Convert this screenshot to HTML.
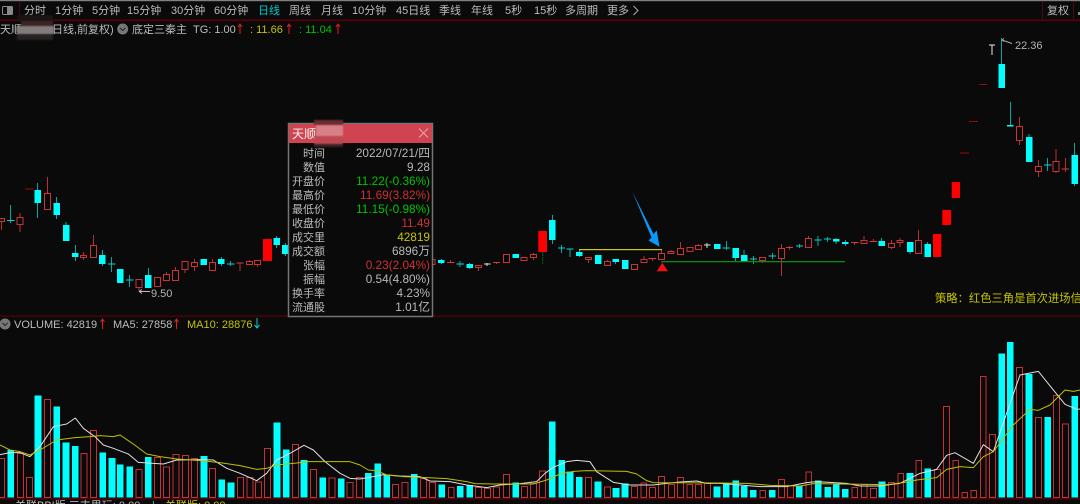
<!DOCTYPE html>
<html><head><meta charset="utf-8"><style>
html,body{margin:0;padding:0;background:#0a0a0a;width:1080px;height:504px;overflow:hidden}
svg{display:block}
text{font-family:"Liberation Sans","WenQuanYi Zen Hei","Noto Sans CJK SC",sans-serif;font-size:11px;fill:#bcbcbc}
.g{fill:#00c400}.r{fill:#cf3034}.y{fill:#c4c400}.w{fill:#b8b8b8}
.v{font-size:11.8px}
.c{shape-rendering:crispEdges}
</style></head><body>
<svg width="1080" height="504" viewBox="0 0 1080 504" xmlns="http://www.w3.org/2000/svg">
<rect width="1080" height="504" fill="#0a0a0a"/>
<rect width="1080" height="1.2" fill="#808080"/>
<rect y="19.5" width="1080" height="1.6" fill="#5c0008"/>
<rect y="315.5" width="1080" height="1.2" fill="#5c0008"/>
<rect y="498" width="1080" height="1.4" fill="#5c0008"/>
<path d="M19.5 2V19M1042.5 2V19M1073.5 2V19" stroke="#4c0a0e" fill="none"/>
<rect x="2.5" y="6.5" width="10" height="8" rx="1" fill="none" stroke="#8a8a8a"/><rect x="7" y="7" width="5" height="7" fill="#8a8a8a"/>
<rect x="1078" y="12" width="2" height="3" fill="#888"/>

<!-- tabs -->
<text x="24" y="14">分时</text><text x="55" y="14">1分钟</text><text x="92" y="14">5分钟</text><text x="127" y="14">15分钟</text><text x="171" y="14">30分钟</text><text x="214" y="14">60分钟</text>
<text x="258" y="14" style="fill:#00c8c8">日线</text><text x="289" y="14">周线</text><text x="321" y="14">月线</text><text x="352" y="14">10分钟</text><text x="396" y="14">45日线</text><text x="439" y="14">季线</text><text x="471" y="14">年线</text><text x="505" y="14">5秒</text><text x="534" y="14">15秒</text><text x="565" y="14">多周期</text><text x="607" y="14">更多</text>
<path d="M633.5 6L638 10.5L633.5 15" fill="none" stroke="#aaa"/>
<text x="1047" y="14">复权</text>

<!-- info line -->
<text x="0" y="33">天顺</text>
<text x="52" y="33">日线,前复权)</text>
<g style="filter:blur(.8px)"><rect x="17" y="15" width="36" height="6" fill="#1c1414"/><rect x="21" y="21" width="32" height="6" fill="#3a2424"/><rect x="17" y="26" width="37" height="8" fill="#847c7c"/><rect x="17" y="34" width="36" height="6" fill="#262222"/></g>
<circle cx="122.7" cy="29" r="5.5" fill="#777"/><path d="M120 27.8l2.7 2.7 2.7-2.7" fill="none" stroke="#222"/>
<text x="132" y="33">底定三秦主</text>
<text x="193" y="33">TG: 1.00</text>
<text x="250" y="33" class="y">: 11.66</text>
<text x="299" y="33" class="g">: 11.04</text>
<path d="M240 24V34M238 27l2-3 2 3M289 24V34M287 27l2-3 2 3M338 24V34M336 27l2-3 2 3" fill="none" stroke="#e02020"/>

<!-- candles: wicks -->
<path class="c" fill="none" stroke="#00a8a8" d="M10.7 205V223M37.7 183V218M56.7 197V219M66 222V225M75.3 245V261M102.3 250V266M111.7 257V272M129.7 275V287M148.3 268V275M221.3 257V266M230.7 261V266M276.7 236V248M285.3 243V256M441.3 259V264M460 261V267M469.7 263V269M552.3 215V244M561.3 245V253M570 249V257M579.3 249V257M615.7 259V264M726.3 241V250M735.7 258V262M744 250V255M753.3 256V264M772.3 253V259M799.3 244V248M818 236V246M827.3 237V242M836 238V244M845.3 240V246M881.7 238V241M910 252V254M927.7 242V244M1001.7 38V64M1010.3 102V125M1029 134V137M1047.7 158V171M1074.7 143V186"/>
<path class="c" fill="none" stroke="#00d8d8" d="M7 220.7h7.5M108 264h7.5M126 280h7.5M227 264h7.5M456.5 264h7.5M558 248h7M566.5 249h7M722.5 248h7.5M750 259h7M768.5 256h7.5M796 246h7M814.5 240h7M824 239h7M1044 165h7.5"/>
<path class="c" fill="none" stroke="#b82e32" d="M1.5 221V230M20 213V232M47.3 177V193M83.7 252V260M93.3 235V245M139 287V291M166.3 272V281M175.7 267V281M185 269V273M194.3 259V271M212.3 259V262M240 263V271M249.3 260V265M257.7 264V267M450.7 260V263M478.3 267V271M496.7 263V264M533.3 253V260M588.7 259V263M607.3 260V266M644 256V263M652.3 259V261M661.7 249V260M671 250V251M680.3 242V248M698.3 244V250M762.7 260V263M781.7 244V276M789.7 246V250M808.7 236V238M854.7 243V245M864 236V240M873.3 239V241M891.3 240V249M900 238V247M918.3 230V240M1019.3 117V145M1038.3 160V177M1056 149V173M1065.3 158V172"/>
<path class="c" fill="none" stroke="#d83a3a" d="M236.5 263h7M447 262.3h7.5M493 262.5h7M648.5 258.5h7.5M786 247.7h7M851 242.5h7.5M869.5 241.5h7.5M1061.5 169h7.5"/>
<path class="c" fill="none" stroke="#98080c" d="M25 189h9M960 153h9M969 121.3h9M979 84.7h8"/>
<!-- red hollow bodies -->
<g class="c" fill="#0a0a0a" stroke="#c83438">
<path d="M-2 218.5h6.5v3h-6.5zM17 217.5h6v7h-6zM44.3 193.5h6v16h-6zM80.7 255.5h6v2h-6zM90.3 245.5h6v12h-6zM136 279.5h6v8h-6zM154.7 277.5h6v9h-6zM163.3 274.5h6v6h-6zM172.7 270.5h6v10h-6zM182 261.5h6v8h-6zM191.3 262.5h6v4h-6zM209.3 262.5h6v8h-6zM246.3 261.5h6v3h-6zM254.7 260.5h6v4h-6zM430 259.5h5v5h-5zM475.3 265.5h6v2h-6zM503.3 254.5h6v8h-6zM521 257.5h6v3h-6zM530.3 254.5h6v3h-6zM585.7 257.5h6v2h-6zM604.3 261.5h6v4h-6zM631.7 264.5h6v5h-6zM641 259.5h6v3h-6zM658.7 253.5h6v6h-6zM668 251.5h6v2h-6zM677.3 248.5h6v6h-6zM687 247.5h6v4h-6zM695.3 245.5h6v4h-6zM759.7 257.5h6v3h-6zM778.7 248.5h6v10h-6zM805.7 238.5h6v9h-6zM861 240.5h6v3h-6zM888.3 243.5h6v4h-6zM897 240.5h6v2h-6zM915.3 240.5h6v13h-6zM1016.3 126.5h6v14h-6zM1035.3 166.5h6v5h-6zM1053 161.5h6v10h-6z"/>
</g>
<path fill="#f00" d="M263 239h9v22h-9zM538.3 231h8.7v21h-8.7zM933 234h8.3v23H933zM942.3 210h8.7v15h-8.7zM951.7 182h8.3v16h-8.3z"/>
<path d="M542.7 252V264" stroke="#0a7a0a" stroke-dasharray="1.5 1" fill="none"/>
<!-- cyan bodies -->
<path class="c" fill="#0ff" d="M34.5 190h6.5v13h-6.5zM53.5 203h6.5v12h-6.5zM62.8 225h6.5v16h-6.5zM72.1 253h6.5v4h-6.5zM99.1 255h6.5v9h-6.5zM117.1 269h6.5v14h-6.5zM145.1 275h6.5v13h-6.5zM200.5 259h6.5v6h-6.5zM218.1 259h6.5v5h-6.5zM273.5 238h6.5v7h-6.5zM282.1 245h6v9h-6zM438.1 260h6.5v3h-6.5zM466.5 264h6.5v4h-6.5zM512.5 254h6.5v4h-6.5zM549.1 220h6.5v20h-6.5zM576.1 252h6.5v4h-6.5zM594.8 255h6.5v9h-6.5zM612.5 259h6.5v3h-6.5zM622.1 260h6.5v9h-6.5zM713.8 244h6.5v5h-6.5zM732.5 248h6.5v10h-6.5zM740.8 255h6.5v7h-6.5zM832.8 239h6.5v2.5h-6.5zM842.1 242h6.5v2h-6.5zM878.5 241h6.5v5h-6.5zM906.8 242h6.5v10h-6.5zM924.5 244h6.5v13h-6.5zM998.5 64h6.5v24h-6.5zM1007.1 125h6.5v1.5h-6.5zM1025.8 137h6.5v25h-6.5zM1071.5 155h6.5v29h-6.5z"/>
<path class="c" fill="none" stroke="#e0e0e0" d="M484 264h6.5M487 263V266M704 245h6.5M707 243V248"/>
<path class="c" fill="none" stroke="#e8e8e8" d="M989 45h6M992 45V55"/>

<!-- price markers -->
<path d="M1002 40l2-1.500M1002 40l2 1.500M1002 40l10 3.500" stroke="#aaa" fill="none"/>
<text x="1015" y="49" style="fill:#b4b4b4">22.36</text>
<path d="M139 291.500h11M139 291.500l3-2M139 291.500l3 2" stroke="#bbb" fill="none"/>
<text x="151" y="297" style="fill:#b4b4b4">9.50</text>

<!-- support/resist lines & signal -->
<rect x="579" y="249" width="83" height="1.200" fill="#c8c820"/>
<rect x="661" y="261" width="184" height="1.300" fill="#0a8a0a"/>
<path d="M656.700 271.300L662.300 262.700L668 271.300z" fill="#f01010"/>
<path d="M632.300 191.700L653.500 234L656.700 230.500L659.500 246.700L648.500 240.500L651.500 237.500z" fill="#0a98f8"/>

<text x="935" y="302" class="y" style="font-size:11.300px">策略：红色三角是首次进场信</text>

<!-- volume header -->
<circle cx="5" cy="324" r="5.500" fill="#777"/><path d="M2.300 322.800l2.700 2.700 2.700-2.700" fill="none" stroke="#222"/>
<text x="14" y="328">VOLUME: 42819</text>
<text x="113" y="328">MA5: 27858</text>
<text x="187" y="328" class="y">MA10: 28876</text>
<path d="M102.500 319V329M100.500 322l2-3 2 3M176.500 319V329M174.500 322l2-3 2 3" fill="none" stroke="#e02020"/>
<path d="M257 318V328M254.500 325l2.500 3 2.500-3" fill="none" stroke="#10c8d8"/>

<!-- bottom cut-off row -->
<text x="15" y="509" class="w">关联BBI版 三丰里玩: 0.00</text>
<text x="165" y="509" class="y">关联版: 0.00</text>
<rect x="153" y="501" width="1" height="3" fill="#0bb"/>

<!-- volume bars, zoom coordinates -->
<g transform="translate(0,310) scale(.33333)">
<path class="c" fill="#0ff" d="M23 420h19v142H23zM104 256h20v306h-20zM160 290h20v272h-20zM188 397h20v165h-20zM216 408h20v154h-20zM298 427h20v135h-20zM326 444h20v118h-20zM351 464h20v98h-20zM379 469h20v93h-20zM435 441h20v121h-20zM602 438h20v124h-20zM655 509h20v53h-20zM683 517h20v45h-20zM821 337h20v225h-20zM849 418h20v144h-20zM902 450h20v112h-20zM958 503h20v59h-20zM1014 506h20v56h-20z"/>
<path class="c" fill="none" stroke="#c43034" stroke-width="3" d="M-5 446h18v116H-5zM52 431h18v131H52zM80 503h18v59H80zM133 269h18v293h-18zM243 431h18v131h-18zM271 362h18v200h-18zM408 479h18v83h-18zM464 442h18v120h-18zM491 471h18v91h-18zM519 434h18v128h-18zM547 437h18v125h-18zM575 446h18v116h-18zM629 476h18v86h-18zM713 502h18v60h-18zM741 502h18v60h-18zM766 516h18v46h-18zM794 415h18v147h-18zM878 404h18v158h-18zM931 479h18v83h-18zM987 504h18v58h-18zM1041 518h18v44h-18zM1069 502h18v60h-18z"/>
<g transform="translate(1080,0)">
<path class="c" fill="#0ff" d="M15 489h20v73H15zM43 461h20v101H43zM70 493h20v69H70zM153 492h20v70h-20zM235 523h20v39h-20zM291 528h20v34h-20zM319 525h20v37h-20zM457 517h20v45h-20zM567 335h20v227h-20zM595 450h20v112h-20zM620 484h20v78h-20zM648 501h20v61h-20zM704 515h20v47h-20zM758 534h20v28h-20zM785 521h20v41h-20zM1061 529h20v33h-20z"/>
<path class="c" fill="none" stroke="#c43034" stroke-width="3" d="M98 524h18v38H98zM126 518h18v44h-18zM182 506h18v56h-18zM209 518h18v44h-18zM265 533h17v29h-17zM347 533h17v29h-17zM374 536h17v26h-17zM401 531h18v31h-18zM431 494h17v68h-17zM485 530h17v32h-17zM512 521h18v41h-18zM539 483h17v79h-17zM677 503h17v59h-17zM734 531h17v31h-17zM815 529h17v33h-17zM843 519h17v43h-17zM869 533h17v29h-17zM896 500h17v62h-17zM926 523h17v39h-17zM953 503h17v59h-17zM981 523h17v39h-17zM1007 523h17v39h-17zM1034 521h17v41h-17z"/>
</g>
<g transform="translate(2160,0)">
<path class="c" fill="#0ff" d="M9 521h20v41H9zM37 512h20v50H37zM63 528h20v34H63zM90 540h20v22H90zM147 540h20v22h-20zM228 528h20v34h-20zM285 512h20v50h-20zM313 531h20v31h-20zM339 520h20v42h-20zM366 537h20v25h-20zM476 514h20v48h-20zM560 489h20v73h-20zM613 475h20v87h-20zM835 130h20v432h-20zM861 96h20v466h-20zM917 192h20v370h-20zM973 321h20v241h-20zM1054 258h20v304h-20z"/>
<path class="c" fill="none" stroke="#c43034" stroke-width="3" d="M120 542h17v20h-17zM176 508h17v54h-17zM203 526h17v36h-17zM258 486h17v76h-17zM396 533h17v29h-17zM424 523h17v39h-17zM452 536h17v26h-17zM506 517h17v45h-17zM534 491h17v71h-17zM588 452h17v110h-17zM644 479h17v83h-17zM671 289h17v273h-17zM699 452h17v110h-17zM726 547h16v15h-16zM753 542h17v20h-17zM781 199h17v363h-17zM809 373h17v189h-17zM890 173h17v389h-17zM947 323h17v239h-17zM1001 257h17v305h-17zM1028 342h17v220h-17z"/>
</g>
<!-- MA lines -->
<g fill="none" stroke-width="3" stroke-linejoin="round">
<path stroke="#e0e0e0" d="M0 434L30 428L60 428L90 440L120 410L160 350L200 342L226 324L250 355L285 380L310 405L340 415L385 432L415 457L490 462L530 450L600 449L640 450L680 475L720 490L770 512L800 490L830 450L870 430L912 406L940 420L975 455L1020 490L1050 505L1080 507L1120 500L1150 494L1200 498L1260 500L1290 513L1350 515L1400 525L1460 533L1500 525L1560 521L1610 515L1635 490L1660 472L1700 455L1730 451L1770 455L1790 485L1840 517L1890 525L1960 525L2000 520L2040 516L2090 513L2120 520L2160 520L2220 525L2280 530L2360 530L2420 518L2450 515L2540 520L2580 528L2640 528L2700 520L2760 490L2810 478L2840 436L2865 428L2920 460L2950 404L2980 425L3020 310L3060 195L3115 184L3160 240L3195 283L3230 298L3240 297"/>
<path stroke="#c0c000" d="M0 405L30 420L60 425L90 435L120 420L170 390L225 383L270 380L300 377L340 380L360 375L400 402L440 432L480 440L530 447L600 452L660 458L720 467L770 478L800 475L830 465L880 460L925 455L1050 455L1080 465L1105 480L1130 482L1160 495L1210 500L1280 503L1340 506L1400 515L1425 521L1480 522L1600 522L1640 510L1680 492L1720 484L1760 482L1880 484L1910 492L1940 512L1960 518L2160 519L2240 520L2310 526L2400 528L2440 521L2660 524L2710 518L2750 510L2810 503L2840 478L2880 470L2920 473L2950 440L2980 425L3040 345L3090 298L3115 301L3150 285L3195 240L3220 244L3240 240"/>
</g>
</g>

<!-- popup -->
<rect x="288.500" y="123.500" width="144" height="193" fill="#0a0a0a" stroke="#747474" stroke-width="1.500"/>
<rect x="289" y="124" width="143" height="19" fill="#cf4450"/>
<text x="292" y="138" style="fill:#f4f4f4;font-size:12px">天顺</text>
<g style="filter:blur(.8px)"><rect x="314" y="120" width="29" height="5" fill="#6a2c30"/><rect x="316" y="125" width="27" height="11" fill="#d88088"/><rect x="314" y="136" width="29" height="8" fill="#c04852"/><rect x="314" y="144" width="29" height="3" fill="#3a2226"/></g>
<path d="M419 128.500l9 9M428 128.500l-9 9" stroke="#eaa4a8" fill="none"/>
<g text-anchor="end">
<text x="325" y="157">时间</text><text x="325" y="171">数值</text><text x="325" y="185">开盘价</text><text x="325" y="199">最高价</text><text x="325" y="213">最低价</text><text x="325" y="227">收盘价</text><text x="325" y="241">成交里</text><text x="325" y="255">成交额</text><text x="325" y="269">张幅</text><text x="325" y="283">振幅</text><text x="325" y="297">换手率</text><text x="325" y="311">流通股</text>
<text x="430" y="157" class="w v">2022/07/21/四</text>
<text x="430" y="171" class="w v">9.28</text>
<text x="430" y="185" class="g v">11.22(-0.36%)</text>
<text x="430" y="199" class="r v">11.69(3.82%)</text>
<text x="430" y="213" class="g v">11.15(-0.98%)</text>
<text x="430" y="227" class="r v">11.49</text>
<text x="430" y="241" class="y v">42819</text>
<text x="430" y="255" class="w v">6896万</text>
<text x="430" y="269" class="r v">0.23(2.04%)</text>
<text x="430" y="283" class="w v">0.54(4.80%)</text>
<text x="430" y="297" class="w v">4.23%</text>
<text x="430" y="311" class="w v">1.01亿</text>
</g>
</svg>
</body></html>
